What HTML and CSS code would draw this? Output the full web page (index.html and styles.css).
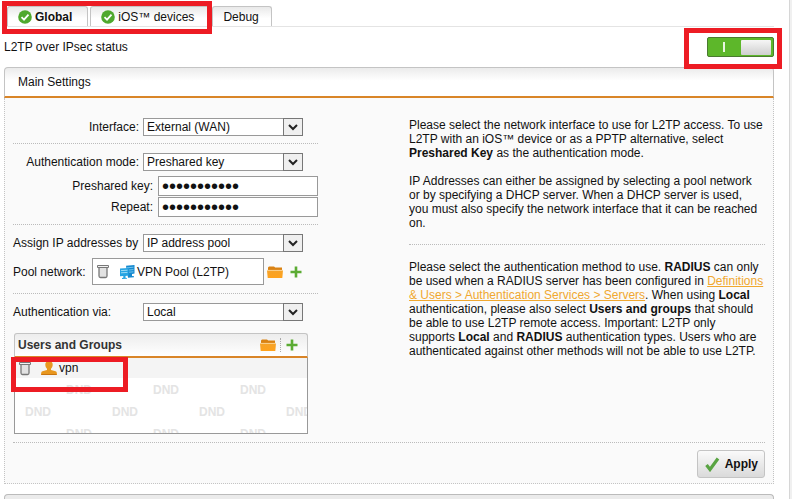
FILE: index.html
```html
<!DOCTYPE html>
<html lang="en">
<head>
<meta charset="utf-8">
<title>L2TP over IPsec</title>
<link rel="stylesheet" href="styles.css">
</head>
<body>
<svg class="defs" aria-hidden="true">
  <defs>
    <linearGradient id="folderFill" x1="0" y1="0" x2="0" y2="1"><stop offset="0" stop-color="#f5a32a"/><stop offset="1" stop-color="#ffa21c"/></linearGradient>
    <symbol id="ok" viewBox="0 0 14 14"><circle cx="7" cy="7" r="6.8" fill="#50a92e"/><path d="M3.5 7.2 6 9.6l4.5-5" fill="none" stroke="#fff" stroke-width="1.8"/></symbol>
    <symbol id="trash" viewBox="0 0 12 15"><path d="M2 3.500v8.500q0 1.500 1.500 1.500h5q1.500 0 1.500-1.500V3.500" fill="#e2e2e2" stroke="#777" stroke-width="1.300"/><path d="M.5 1.500h11v2H.5z" fill="#f2f2f2" stroke="#777"/></symbol>
    <symbol id="folder" viewBox="0 0 16 12"><path d="M1 4V1.500L2 .5h5l1.200 1H15V4z" fill="#d98213"/><path d="M0 4.200h16L15.300 12H.7z" fill="url(#folderFill)"/><path d="M0 4.400h16" stroke="#fbd08d"/></symbol>
    <symbol id="plus" viewBox="0 0 12 12"><path d="M6 .5v11M.5 6h11" stroke="#5bab33" stroke-width="2.6"/></symbol>
    <symbol id="chevron" viewBox="0 0 10 7"><path d="M1 1l4 4 4-4" fill="none" stroke="#222" stroke-width="2"/></symbol>
    <symbol id="network" viewBox="0 0 15 14"><path d="M6 .8 14.500 0v8.500L12 9v2l2 .3v1L8 12.800z" fill="#1689cf"/><path d="M7 2.800l6.500-.6M9 5l4.500-.4M9 7.200l4.500-.4" stroke="#70c4ee"/><path d="M0 3.600 8.500 3v7.500L5.500 11v1.800l1.500.2v.8l-5 .2v-1l1.300-.2V11L0 11.200z" fill="#27a4e2"/><path d="M1 5.600l6.500-.4M1 7.800l6.500-.4" stroke="#9bdaf5"/></symbol>
    <symbol id="user" viewBox="0 0 16 14"><path d="M8 0c2.700 0 3.900 1.800 3.700 4-.2 1.900-.8 3-1.700 3.700v1.400l4.500 1.100c1 .3 1.500 1.200 1.500 3.800H0c0-2.600.5-3.500 1.500-3.800L6 9.100V7.700C5.100 7 4.500 5.900 4.300 4 4.100 1.800 5.300 0 8 0z" fill="#e8971f"/><path d="M.5 13.500h15" stroke="#c87512"/></symbol>
    <symbol id="tick" viewBox="0 0 15 15"><path d="M1.500 8 5 12.500 13 1.500" fill="none" stroke="#59a442" stroke-width="3.200"/></symbol>
  </defs>
</svg>
<div class="page">
  <nav class="tabs">
    <a class="tab active" href="#global"><svg class="ok"><use href="#ok"/></svg>Global</a>
    <a class="tab" href="#ios"><svg class="ok"><use href="#ok"/></svg>iOS™ devices</a>
    <a class="tab" href="#debug">Debug</a>
    <span class="mark mark-tabs"></span>
  </nav>
  <header class="status">
    <span>L2TP over IPsec status</span>
    <button class="switch" type="button" role="switch" aria-checked="true" aria-label="L2TP over IPsec status"><span class="on"></span><span class="knob"></span></button>
    <span class="mark mark-switch"></span>
  </header>
  <form class="panel">
    <h2 class="panel-title">Main Settings</h2>
    <div class="panel-body">
      <div class="columns">
        <div class="fields">
          <section class="block">
            <div class="row"><label for="iface">Interface:</label><span class="select"><select id="iface"><option>External (WAN)</option></select><span class="drop"><svg><use href="#chevron"/></svg></span></span></div>
          </section>
          <section class="block">
            <div class="row"><label for="mode">Authentication mode:</label><span class="select"><select id="mode"><option>Preshared key</option></select><span class="drop"><svg><use href="#chevron"/></svg></span></span></div>
            <div class="row key"><label for="psk">Preshared key:</label><input id="psk" type="password" value="preshared12"></div>
            <div class="row key"><label for="psk2">Repeat:</label><input id="psk2" type="password" value="preshared12"></div>
          </section>
          <section class="block">
            <div class="row start"><label for="assign">Assign IP addresses by</label><span class="select"><select id="assign"><option>IP address pool</option></select><span class="drop"><svg><use href="#chevron"/></svg></span></span></div>
            <div class="pool">
              <span class="pool-label">Pool network:</span>
              <div class="pool-box"><button class="icon" type="button" aria-label="Remove"><svg class="trash"><use href="#trash"/></svg></button><svg class="network"><use href="#network"/></svg><span>VPN Pool (L2TP)</span></div>
              <button class="icon" type="button" aria-label="Browse"><svg class="folder"><use href="#folder"/></svg></button>
              <button class="icon" type="button" aria-label="Add"><svg class="plus"><use href="#plus"/></svg></button>
            </div>
          </section>
          <section class="block last">
            <div class="row start"><label for="via">Authentication via:</label><span class="select"><select id="via"><option>Local</option></select><span class="drop"><svg><use href="#chevron"/></svg></span></span></div>
            <div class="group">
              <div class="group-head">
                <h3>Users and Groups</h3>
                <button class="icon" type="button" aria-label="Browse"><svg class="folder"><use href="#folder"/></svg></button>
                <span class="sep"></span>
                <button class="icon" type="button" aria-label="Add"><svg class="plus"><use href="#plus"/></svg></button>
              </div>
              <div class="group-item"><button class="icon" type="button" aria-label="Remove"><svg class="trash"><use href="#trash"/></svg></button><svg class="user"><use href="#user"/></svg><span>vpn</span></div>
              <div class="drop-zone">
                <div class="dnd shifted"><span>DND</span><span>DND</span><span>DND</span></div>
                <div class="dnd"><span>DND</span><span>DND</span><span>DND</span><span>DND</span></div>
                <div class="dnd shifted"><span>DND</span><span>DND</span><span>DND</span></div>
              </div>
              <span class="mark mark-user"></span>
            </div>
          </section>
        </div>
        <div class="help">
          <div class="help-top">
            <p>Please select the network interface to use for L2TP access. To use L2TP with an iOS™ device or as a PPTP alternative, select <b>Preshared Key</b> as the authentication mode.</p>
            <p>IP Addresses can either be assigned by selecting a pool network or by specifying a DHCP server. When a DHCP server is used,<br>you must also specify the network interface that it can be reached<br>on.</p>
          </div>
          <p>Please select the authentication method to use. <b>RADIUS</b> can only be used when a RADIUS server has been configured in <a href="#servers">Definitions &amp; Users &gt; Authentication Services &gt; Servers</a>. When using <b>Local</b> authentication, please also select <b>Users and groups</b> that should be able to use L2TP remote access. Important: L2TP only<br>supports <b>Local</b> and <b>RADIUS</b> authentication types. Users who are authenticated against other methods will not be able to use L2TP.</p>
        </div>
      </div>
      <div class="actions"><button class="apply" type="submit"><svg><use href="#tick"/></svg>Apply</button></div>
    </div>
  </form>
  <div class="next-panel"></div>
</div>
</body>
</html>
```
FILE: styles.css
```css
* { box-sizing: border-box; }
html, body { height: 100%; }
body {
  margin: 0;
  overflow: hidden;
  background: #f0f0f0;
  color: #111;
  font: 12px/14px "Liberation Sans", Arial, sans-serif;
}
h2, h3, p { margin: 0; font-size: 12px; }
svg { display: block; flex: none; }
button, input, select { font: inherit; color: inherit; margin: 0; }
.defs { position: absolute; width: 0; height: 0; }
.page {
  height: 100%;
  margin-right: 2px;
  padding: 6px 15px 0 4px;
  background: #fff;
  border-right: 1px solid #d6d6d6;
}

.tabs {
  position: relative;
  display: flex;
  gap: 2px;
  height: 21px;
  padding-left: 3px;
  border-bottom: 1px solid #e4e4e4;
}
.tab {
  display: flex;
  align-items: center;
  gap: 3px;
  height: 20px;
  padding: 0 15px 0 10px;
  border: 1px solid #c4c4c4;
  border-bottom: 0;
  border-radius: 3px 3px 0 0;
  background: linear-gradient(#e9e9e9, #fff 60%);
  color: inherit;
  text-decoration: none;
}
.tab:last-of-type { padding-right: 12px; }
.tab.active { font-weight: bold; }
.ok { width: 14px; height: 14px; }

.mark {
  position: absolute;
  z-index: 2;
  border: 5px solid #ed1c24;
  pointer-events: none;
}
.mark-tabs { left: -2px; top: -5px; width: 210px; height: 33px; }
.mark-switch { right: -8px; top: 1px; width: 98px; height: 41px; }
.mark-user { left: -3px; top: 24px; width: 117px; height: 35px; }

.status {
  position: relative;
  display: flex;
  align-items: center;
  justify-content: space-between;
  height: 40px;
}
.switch {
  display: flex;
  align-items: center;
  justify-content: space-between;
  width: 67px;
  height: 20px;
  padding: 0 2px 0 15px;
  border: 1px solid #4a7a30;
  border-radius: 2px;
  background: #5db72a;
}
.on { width: 2px; height: 10px; background: #e9f6df; }
.knob { width: 30px; height: 15px; border-radius: 1px; background: linear-gradient(#f6f6f6, #cfcfcf); }

.panel-title {
  height: 31px;
  padding-left: 13px;
  border: 1px solid #c4c4c4;
  border-bottom: 2px solid #d98528;
  border-radius: 4px 4px 0 0;
  background: linear-gradient(#ebebeb, #fff 45%);
  font-weight: normal;
  line-height: 28px;
}
.panel-body {
  padding: 0 8px;
  border: 1px dotted #c4c4c4;
  border-top: 0;
  background: #fafafa;
}
.columns {
  display: grid;
  grid-template-columns: 305px minmax(0, 356px);
  justify-content: space-between;
  padding-top: 11px;
}
.block { padding: 9px 0 7px; border-bottom: 1px dotted #bbb; }
.row { display: flex; align-items: center; justify-content: flex-end; gap: 4px; padding-right: 15px; }
.row.start { justify-content: space-between; }
.row.key { padding: 0; margin-top: 5px; gap: 5px; }
.key + .row.key { margin-top: 1px; }
.select { position: relative; width: 160px; }
.select select {
  display: block;
  width: 100%;
  height: 18px;
  padding: 0 20px 0 3px;
  border: 1px solid #999;
  border-radius: 0;
  background: #fff;
  appearance: none;
}
.drop {
  position: absolute;
  top: 0;
  right: 0;
  display: grid;
  place-items: center;
  width: 20px;
  height: 18px;
  border: 1px solid #777;
  background: #efefef;
  pointer-events: none;
}
.drop svg { width: 10px; height: 7px; }
.key input {
  width: 160px;
  height: 20px;
  padding: 0 3px;
  border: 1px solid #999;
  background: #fff;
  font-size: 20px;
}
.icon { display: block; flex: none; padding: 0; border: 0; background: none; }
.trash { width: 12px; height: 15px; }
.folder { width: 16px; height: 12px; }
.plus { width: 12px; height: 12px; }
.network { width: 15px; height: 14px; margin: 0 2px 0 11px; }
.user { width: 16px; height: 14px; margin: 0 2px 0 10px; }
.pool { display: flex; align-items: center; margin: 6px 0 1px; }
.pool-label { width: 79px; }
.pool-box {
  display: flex;
  align-items: center;
  width: 172px;
  height: 27px;
  margin-right: 3px;
  padding-left: 4px;
  border: 1px solid #999;
  background: #fff;
}
.pool .icon + .icon { margin-left: 7px; }

.block.last { border: 0; padding-bottom: 8px; }
.group {
  position: relative;
  width: 294px;
  margin: 12px 0 0 1px;
}
.group-head {
  display: flex;
  align-items: center;
  height: 25px;
  padding: 0 9px 0 3px;
  border: 1px solid #c4c4c4;
  border-bottom: 2px solid #d98528;
  border-radius: 3px 3px 0 0;
  background: linear-gradient(#ededed, #fff);
}
.group-head h3 { flex: 1; color: #333; }
.sep { height: 14px; margin: 0 5px 0 4px; border-left: 1px dotted #aaa; }
.group-item {
  display: flex;
  align-items: center;
  height: 20px;
  padding-left: 4px;
  border: solid #999;
  border-width: 0 1px;
  background: #f4f4f4;
}
.drop-zone {
  height: 56px;
  overflow: hidden;
  padding-top: 1px;
  border: 1px solid #999;
  border-top: 0;
  background: #fff;
  color: #e4e4e4;
  font-weight: bold;
}
.dnd { display: flex; gap: 60px; height: 22px; padding-left: 10px; line-height: 22px; }
.dnd.shifted { padding-left: 51px; }
.dnd span { flex: none; width: 27px; }

.help { padding-top: 9px; }
.help-top { margin-bottom: 15px; padding-bottom: 14px; border-bottom: 1px dotted #bbb; }
.help-top p + p { margin-top: 14px; }
.help a { color: #f0a830; }

.actions { display: flex; justify-content: flex-end; padding: 7px 0 5px; border-top: 1px dotted #bbb; }
.apply {
  display: flex;
  align-items: center;
  gap: 5px;
  height: 28px;
  padding: 0 6px 0 7px;
  border: 1px solid #c4c4c4;
  border-radius: 3px;
  background: linear-gradient(#fafafa, #dadada);
  font-weight: bold;
}
.apply svg { width: 15px; height: 15px; }
.next-panel {
  height: 12px;
  margin-top: 10px;
  border: 1px solid #bbb;
  border-bottom: 0;
  border-radius: 4px 4px 0 0;
  background: #ebebeb;
}
```
